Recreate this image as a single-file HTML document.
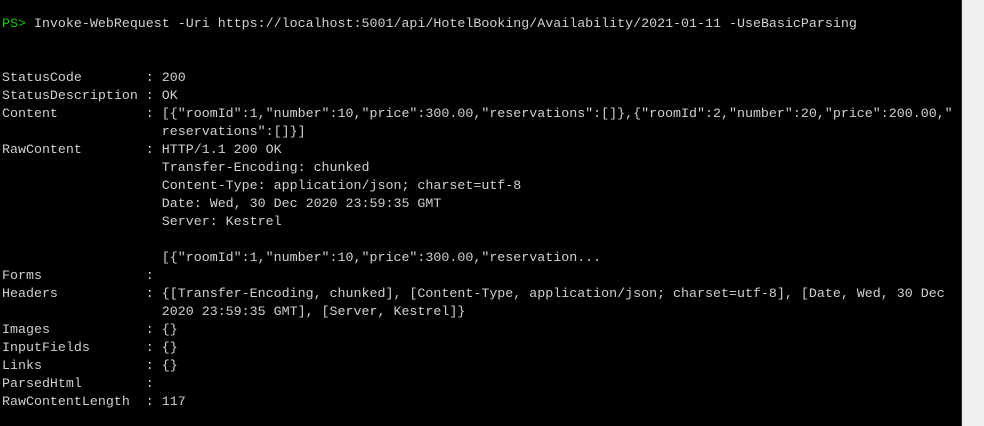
<!DOCTYPE html>
<html><head><style>
html,body{margin:0;padding:0;width:984px;height:426px;overflow:hidden;background:#000}
.t{position:absolute;left:2px;top:15px;font-family:"Liberation Mono",monospace;font-size:13.32px;line-height:18px;color:#d0d0d0;white-space:pre;margin:0}
.g{color:#16c60c}
.sb{position:absolute;left:961px;top:0;width:23px;height:426px;background:#f0f0f0;border-left:1px solid #2a2a2a}
</style></head><body>
<pre class="t"><span class="g">PS&gt;</span> Invoke-WebRequest -Uri https://localhost:5001/api/HotelBooking/Availability/2021-01-11 -UseBasicParsing


StatusCode        : 200
StatusDescription : OK
Content           : [{"roomId":1,"number":10,"price":300.00,"reservations":[]},{"roomId":2,"number":20,"price":200.00,"
                    reservations":[]}]
RawContent        : HTTP/1.1 200 OK
                    Transfer-Encoding: chunked
                    Content-Type: application/json; charset=utf-8
                    Date: Wed, 30 Dec 2020 23:59:35 GMT
                    Server: Kestrel

                    [{"roomId":1,"number":10,"price":300.00,"reservation...
Forms             :
Headers           : {[Transfer-Encoding, chunked], [Content-Type, application/json; charset=utf-8], [Date, Wed, 30 Dec
                    2020 23:59:35 GMT], [Server, Kestrel]}
Images            : {}
InputFields       : {}
Links             : {}
ParsedHtml        :
RawContentLength  : 117</pre>
<div class="sb"></div>
</body></html>
